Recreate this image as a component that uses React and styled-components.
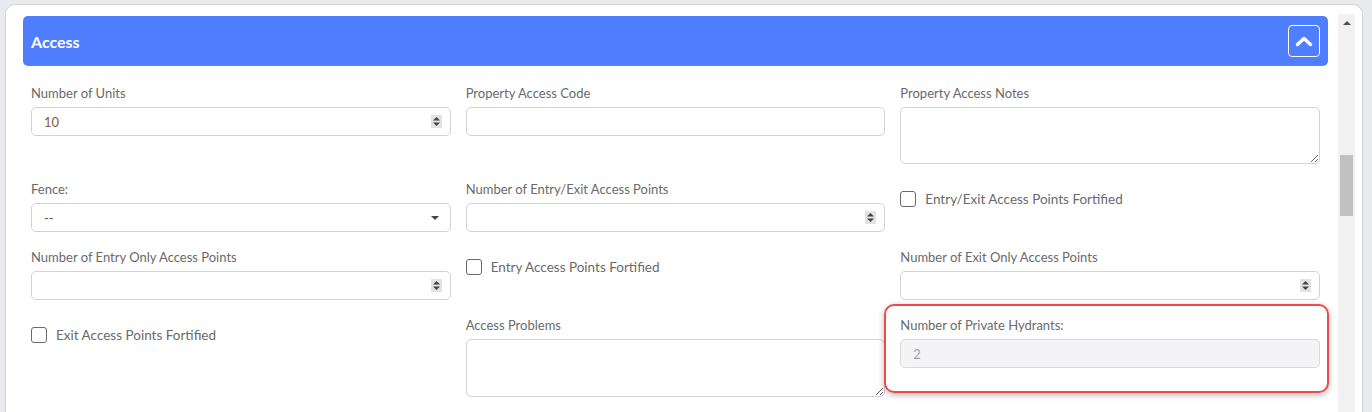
import styled, { createGlobalStyle } from 'styled-components'

const GlobalStyle = createGlobalStyle`
  html, body {
    margin: 0;
    height: 100%;
    overflow: hidden;
  }
  body {
    background: #e9eaee;
    font-family: Lato, "Noto Sans", sans-serif;
  }
  #root {
    height: 100%;
  }
`

export default function App() {
  return (
    <Page>
      <GlobalStyle />
      <Card>
        <Content>
          <PanelHeader>
            <PanelTitle>Access</PanelTitle>
            <ToggleButton type="button" aria-label="Collapse">
              <svg width="18" height="12" viewBox="0 0 18 12">
                <polyline points="2.5,9.5 9,3.5 15.5,9.5" fill="none" stroke="#fff" strokeWidth="3.4" strokeLinecap="round" strokeLinejoin="round" />
              </svg>
            </ToggleButton>
          </PanelHeader>

          <PanelBody>
            <FieldGroup>
              <Label>Number of Units</Label>
              <NumberInput value="10" color="#8c5a32" />
            </FieldGroup>
            <FieldGroup>
              <Label>Property Access Code</Label>
              <Control>
                <Field defaultValue="" />
              </Control>
            </FieldGroup>
            <FieldGroup>
              <Label>Property Access Notes</Label>
              <TextArea $height={57} />
            </FieldGroup>

            <FieldGroup>
              <Label>Fence:</Label>
              <Control>
                <Field defaultValue="--" readOnly />
                <Caret />
              </Control>
            </FieldGroup>
            <FieldGroup>
              <Label>Number of Entry/Exit Access Points</Label>
              <NumberInput value="" />
            </FieldGroup>
            <CheckGroup label="Entry/Exit Access Points Fortified" />

            <FieldGroup>
              <Label>Number of Entry Only Access Points</Label>
              <NumberInput value="" />
            </FieldGroup>
            <CheckGroup label="Entry Access Points Fortified" />
            <FieldGroup>
              <Label>Number of Exit Only Access Points</Label>
              <NumberInput value="" />
            </FieldGroup>

            <CheckGroup label="Exit Access Points Fortified" />
            <FieldGroup>
              <Label>Access Problems</Label>
              <TextArea $height={58} />
            </FieldGroup>
            <FieldGroup>
              <Highlight />
              <Label>Number of Private Hydrants:</Label>
              <Control $disabled>
                <Field defaultValue="2" disabled $muted />
              </Control>
            </FieldGroup>
          </PanelBody>
        </Content>

        <Scrollbar>
          <ScrollArrow />
          <ScrollThumb />
        </Scrollbar>
      </Card>
    </Page>
  )
}

function NumberInput({ value, color }) {
  return (
    <Control>
      <Field defaultValue={value} style={color ? { color } : undefined} />
      <Spinner>
        <svg width="11" height="13" viewBox="0 0 11 13">
          <polygon points="2,5.5 5.5,2 9,5.5" fill="#444" />
          <polygon points="2,7.5 5.5,11 9,7.5" fill="#444" />
        </svg>
      </Spinner>
    </Control>
  )
}

function CheckGroup({ label }) {
  return (
    <CheckRow>
      <CheckBox type="checkbox" />
      <CheckLabel>{label}</CheckLabel>
    </CheckRow>
  )
}

const Page = styled.div`
  box-sizing: border-box;
  height: 412px;
  padding: 4px 9px 0 5px;
`

const Card = styled.div`
  box-sizing: border-box;
  height: 100%;
  display: flex;
  background: #ffffff;
  border: 1px solid #d3d5d9;
  border-bottom: none;
  border-radius: 10px 10px 0 0;
  padding-right: 7px;
  overflow: hidden;
`

const Content = styled.div`
  flex: 1;
  min-width: 0;
  padding: 11px 10px 0 17px;
`

const PanelHeader = styled.div`
  height: 50px;
  display: flex;
  align-items: center;
  justify-content: space-between;
  padding: 0 8px;
  background: #4f7eff;
  border-radius: 5px;
`

const PanelTitle = styled.h3`
  margin: 0;
  color: #ffffff;
  font-size: 16px;
  font-weight: 700;
`

const ToggleButton = styled.button`
  width: 32px;
  height: 32px;
  padding: 0;
  display: flex;
  align-items: center;
  justify-content: center;
  background: transparent;
  border: 1px solid #ffffff;
  border-radius: 4px;
`

const PanelBody = styled.div`
  display: grid;
  grid-template-columns: repeat(3, 1fr);
  column-gap: 15px;
  align-items: start;
  padding: 17px 8px 0;
`

const FieldGroup = styled.div`
  position: relative;
  margin-bottom: 15px;
`

const Label = styled.label`
  display: block;
  margin-bottom: 4px;
  font-size: 13px;
  line-height: 20px;
  color: #6a6a6a;
`

const Control = styled.div`
  box-sizing: border-box;
  height: 29px;
  display: flex;
  align-items: center;
  gap: 6px;
  padding: 0 8px 0 12px;
  border: 1px solid ${p => (p.$disabled ? '#d8d9dc' : '#cfd2d6')};
  border-radius: 5px;
  background: ${p => (p.$disabled ? '#f4f4f6' : '#ffffff')};
`

const Field = styled.input`
  flex: 1;
  min-width: 0;
  padding: 0;
  border: none;
  outline: none;
  background: transparent;
  font-family: inherit;
  font-size: 13px;
  color: ${p => (p.$muted ? '#a0a0a0' : '#555555')};
`

const Spinner = styled.span`
  width: 11px;
  height: 13px;
  display: flex;
  background: #e2e2e2;
`

const Caret = styled.span`
  width: 0;
  height: 0;
  margin-right: 3px;
  border-left: 4px solid transparent;
  border-right: 4px solid transparent;
  border-top: 4px solid #444444;
`

const TextArea = styled.textarea`
  box-sizing: border-box;
  display: block;
  width: 100%;
  height: ${p => p.$height}px;
  border: 1px solid #cfd2d6;
  border-radius: 5px;
  resize: vertical;
  font-family: inherit;
  font-size: 13px;
  outline: none;
`

const CheckRow = styled.div`
  display: flex;
  align-items: center;
  gap: 9px;
  padding-top: 10px;
  margin-bottom: 15px;
`

const CheckBox = styled.input`
  appearance: none;
  box-sizing: border-box;
  width: 16px;
  height: 16px;
  margin: 0;
  border: 1px solid #6a6a6a;
  border-radius: 3px;
  background: #ffffff;
`

const CheckLabel = styled.span`
  font-size: 13.5px;
  line-height: 20px;
  color: #6a6a6a;
`

const Highlight = styled.span`
  position: absolute;
  top: -11px;
  left: -16px;
  right: -9px;
  bottom: -25px;
  border: 2px solid #ec4a4e;
  border-radius: 10px;
  box-shadow: 0 2px 6px rgba(0, 0, 0, 0.28);
  pointer-events: none;
`

const Scrollbar = styled.div`
  width: 17px;
  margin-top: 9px;
  display: flex;
  flex-direction: column;
  align-items: center;
  background: #f1f1f1;
`

const ScrollArrow = styled.span`
  width: 0;
  height: 0;
  margin-top: 7px;
  border-left: 4px solid transparent;
  border-right: 4px solid transparent;
  border-bottom: 4px solid #505050;
`

const ScrollThumb = styled.span`
  width: 13px;
  height: 61px;
  margin-top: 130px;
  background: #c1c1c1;
`
